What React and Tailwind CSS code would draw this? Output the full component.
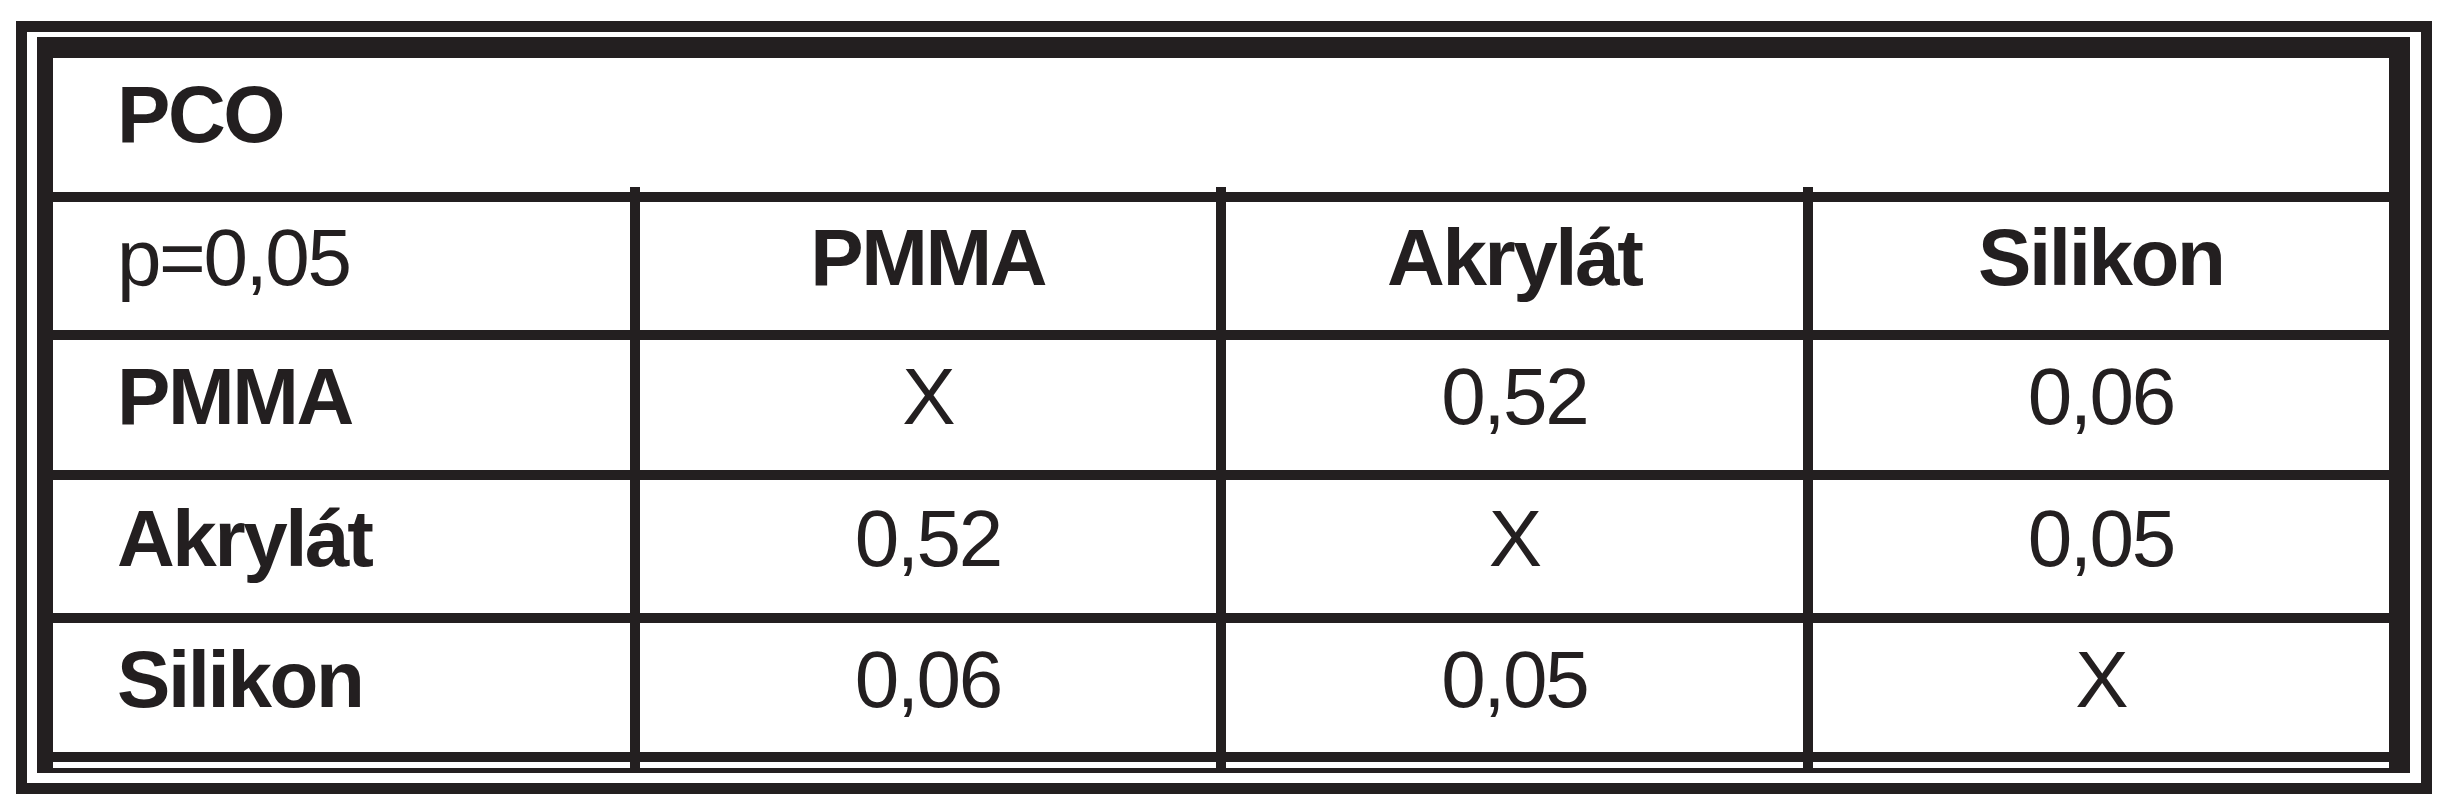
import React from "react";

const ROWS = [
  { label: "p=0,05", labelBold: false, cells: ["PMMA", "Akrylát", "Silikon"], bold: true, h: "h-[128px]" },
  { label: "PMMA", labelBold: true, cells: ["X", "0,52", "0,06"], bold: false, h: "h-[128px]" },
  { label: "Akrylát", labelBold: true, cells: ["0,52", "X", "0,05"], bold: false, h: "h-[133px]" },
  { label: "Silikon", labelBold: true, cells: ["0,06", "0,05", "X"], bold: false, h: "h-[129px]" },
];

const heights = ["h-[128px]", "h-[130px]", "h-[133px]", "h-[129px]"];

function Line() {
  return <div className="h-[10px] bg-[#231f20] shrink-0" />;
}

function Column({ index }) {
  return (
    <div className="flex-1 flex flex-col">
      <div className="h-[5px] shrink-0" />
      {ROWS.map((r, i) => {
        const text = index === 0 ? r.label : r.cells[index - 1];
        const bold = index === 0 ? r.labelBold : r.bold;
        return (
          <React.Fragment key={i}>
            <Line />
            <div
              className={`${heights[i]} shrink-0 flex items-center pb-[16px] ${
                index === 0 ? "justify-start pl-[64px]" : "justify-center"
              } ${bold ? "font-bold" : "font-normal"}`}
            >
              {text}
            </div>
          </React.Fragment>
        );
      })}
      <Line />
      <div className="flex-1" />
    </div>
  );
}

function Divider() {
  return <div className="w-[10px] shrink-0 bg-[#231f20]" />;
}

export default function App() {
  return (
    <div
      className="w-[2453px] h-[800px] bg-white pt-[21px] pl-[16px] text-[#231f20] text-[80px] leading-none tracking-[-0.03em]"
      style={{ fontFamily: '"Liberation Sans", Arial, sans-serif' }}
    >
      <div className="w-[2416px] h-[773px] border-[11px] border-[#231f20] pt-[5px] pl-[10px] pr-[11px] pb-[10px]">
        <div className="h-full border-solid border-[#231f20] border-l-[16px] border-t-[21px] border-r-[21px] border-b-[5px] flex flex-col">
          <div className="h-[129px] shrink-0 flex items-center pl-[64px] pb-[16px] font-bold">PCO</div>
          <div className="flex-1 flex">
            <Column index={0} />
            <Divider />
            <Column index={1} />
            <Divider />
            <Column index={2} />
            <Divider />
            <Column index={3} />
          </div>
        </div>
      </div>
    </div>
  );
}
